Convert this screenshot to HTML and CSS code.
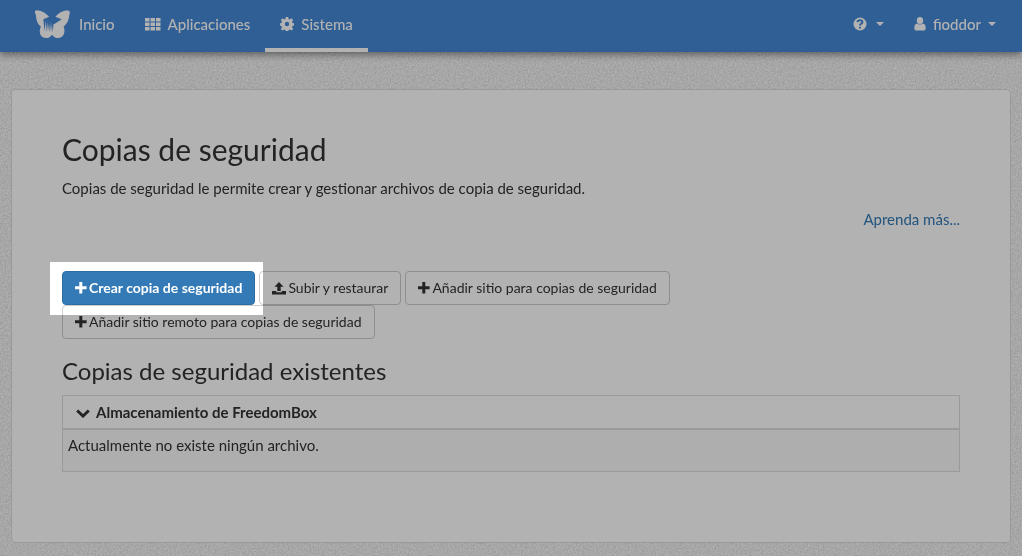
FILE: index.html
```html
<!DOCTYPE html>
<html lang="es">
<head>
<meta charset="utf-8">
<meta name="viewport" content="width=device-width, initial-scale=1">
<title>Copias de seguridad</title>
<link rel="stylesheet" href="styles.css">
</head>
<body>
<svg class="paper" aria-hidden="true">
  <filter id="grain" x="0" y="0" width="100%" height="100%" color-interpolation-filters="sRGB">
    <feTurbulence type="fractalNoise" baseFrequency="0.6" numOctaves="2" seed="4"/>
    <feColorMatrix values="0.2 0.1 0 0 0.787  0.2 0.1 0 0 0.787  0.2 0.1 0 0 0.787  0 0 0 0 1"/>
  </filter>
  <rect width="100%" height="100%" filter="url(#grain)"/>
</svg>
<nav class="navbar">
  <div class="nav-left">
    <a class="brand" href="#" aria-label="FreedomBox, Inicio">
      <svg class="logo" viewBox="0 0 38 30">
        <path fill="#fff" d="M1 3C0 1 2 0 4 0.500C9 1 13 4 15.500 7L9.500 9.500L13 12L20 15L25 12L28.500 9.500L22 7C25 3 30 0.500 34 0.500C37 0.500 37.500 2 36.500 5C36 9 35 14 30.500 17C33 23 30 29 25 29C22 29 20 27.500 18.500 25.500C17 27.500 15.500 29 12 29C7 29 4 23 7 17C3.500 15 2 10 2 6Z"/>
        <path fill="#4488d6" d="M9.500 9.500L10.800 22L12 11.500L13.200 23L14.200 12.500L15.500 23L16.400 13.500L17.500 23L18.300 14.200L19.300 23L20 15Z"/>
      </svg>
      <span>Inicio</span>
    </a>
    <a class="nav-link" href="#">
      <svg class="icon-grid" viewBox="0 0 16 13" fill="#fff"><path d="M0 0h4.500v3.500H0zM5.500 0H10v3.500H5.500zM11 0h4.500v3.500H11zM0 4.500h4.500V8H0zM5.500 4.500H10V8H5.500zM11 4.500h4.500V8H11zM0 9h4.500v3.500H0zM5.500 9H10v3.500H5.500zM11 9h4.500v3.500H11z"/></svg>
      <span>Aplicaciones</span>
    </a>
    <a class="nav-link active" href="#">
      <svg class="icon" viewBox="0 0 14 14"><path fill="#fff" fill-rule="evenodd" d="M5.800 0h2.400l.4 2 1.200.5 1.700-1.200 1.700 1.700-1.200 1.700.5 1.200 1.500.3v2.400l-1.500.4-.5 1.200 1.200 1.700-1.700 1.700-1.700-1.200-1.200.5-.4 1.600H5.800l-.4-1.600-1.200-.5-1.700 1.200L.8 11.900 2 10.200 1.500 9 0 8.600V6.200l1.500-.3L2 4.700.8 3l1.700-1.700 1.700 1.200L5.400 2zM7 4.800a2.200 2.200 0 1 0 0 4.400a2.200 2.200 0 0 0 0-4.400z"/></svg>
      <span>Sistema</span>
    </a>
  </div>
  <div class="nav-right">
    <button class="nav-menu" type="button" aria-label="Ayuda">
      <svg class="icon" viewBox="0 0 14 14"><circle cx="7" cy="7" r="6.500" fill="#fff"/><path fill="none" stroke="#4488d6" stroke-width="2" d="M4.500 5.200Q4.700 3.300 7 3.300T9.400 5.200Q9.400 6.300 8 6.900Q7 7.300 7 8.600M7 9.700v1.800"/></svg>
      <span class="caret"></span>
    </button>
    <button class="nav-menu user" type="button">
      <svg class="icon-user" viewBox="0 0 12 14"><path fill="#fff" d="M6 0a3.200 3.500 0 0 1 0 7a3.200 3.500 0 0 1 0-7zM3 6.500Q6 8.700 9 6.500Q11.700 7 11.700 11Q11.700 13.500 10 13.500H2Q.3 13.500.3 11Q.3 7 3 6.500z"/></svg>
      <span>fioddor</span>
      <span class="caret"></span>
    </button>
  </div>
</nav>
<main class="card">
  <h1>Copias de seguridad</h1>
  <p class="lead">Copias de seguridad le permite crear y gestionar archivos de copia de seguridad.</p>
  <p class="more"><a href="#">Aprenda más...</a></p>
  <div class="toolbar">
    <div class="highlighted">
      <a class="btn primary" href="#"><svg class="plus" viewBox="0 0 12 12"><path d="M4.300 0h3v4.300H11.600v3H7.300v4.300h-3V7.300H0v-3h4.300z"/></svg><span>Crear copia de seguridad</span></a>
      <div class="spotlight"></div>
    </div>
    <a class="btn" href="#"><svg class="upload" viewBox="0 0 14 13"><path d="M7 0l4.500 4.700H8.700V9H5.300V4.700H2.500zM0 9h4.300v1.200h5.400V9H14v3.500H0z"/></svg><span>Subir y restaurar</span></a>
    <a class="btn" href="#"><svg class="plus" viewBox="0 0 12 12"><path d="M4.300 0h3v4.300H11.600v3H7.300v4.300h-3V7.300H0v-3h4.300z"/></svg><span>Añadir sitio para copias de seguridad</span></a>
    <a class="btn" href="#"><svg class="plus" viewBox="0 0 12 12"><path d="M4.300 0h3v4.300H11.600v3H7.300v4.300h-3V7.300H0v-3h4.300z"/></svg><span>Añadir sitio remoto para copias de seguridad</span></a>
  </div>
  <h3>Copias de seguridad existentes</h3>
  <table class="archives">
    <thead>
      <tr><th scope="col"><svg class="chevron" viewBox="0 0 14 9"><path d="M1.200 1.500L7 7L12.800 1.500"/></svg>Almacenamiento de FreedomBox</th></tr>
    </thead>
    <tbody>
      <tr><td>Actualmente no existe ningún archivo.</td></tr>
    </tbody>
  </table>
</main>
</body>
</html>
```
FILE: styles.css
```css
* { box-sizing: border-box; }
body {
  margin: 0;
  background: #f0f0f0;
  color: #333;
  font: 15px/22px Lato, sans-serif;
}
a { color: #337ab7; text-decoration: none; }
svg { flex: none; }
.paper {
  position: fixed;
  inset: 0;
  z-index: -1;
  width: 100%;
  height: 100%;
}
.navbar {
  display: flex;
  justify-content: space-between;
  height: 52px;
  padding: 0 11px 0 34px;
  background: #4488d6;
  box-shadow: 0 2px 8px rgba(0, 0, 0, 0.5);
  font-weight: 500;
}
.nav-left, .nav-right { display: flex; }
.brand, .nav-link, .nav-menu {
  display: flex;
  align-items: center;
  color: #fff;
  padding: 0 15px 4px;
}
.brand { gap: 8px; padding-left: 0; }
.nav-link { gap: 7px; }
.nav-link.active { border-bottom: 4px solid #fff; padding-bottom: 0; }
.nav-menu {
  gap: 9px;
  border: 0;
  background: none;
  font: inherit;
}
.nav-menu.user { gap: 7px; }
.logo { width: 37px; height: 29px; }
.icon { width: 14px; height: 14px; }
.icon-grid { width: 16px; height: 13px; }
.icon-user { width: 12px; height: 14px; }
.caret {
  border: 4px solid transparent;
  border-top-color: #fff;
  border-bottom: 0;
}
.card {
  margin: 37px 11px 13px;
  padding: 39px 50px 70px;
  border: 1px solid #dcdcdc;
  border-radius: 4px;
  background: #fff;
}
h1, h3 { margin: 0; font-weight: 400; }
h1 { font-size: 30px; line-height: 40px; }
h3 { margin: 17px 0 9px; font-size: 24px; line-height: 30px; }
.lead { margin: 8px 0 9px; }
.more { margin: 0 0 41px; text-align: right; }
.toolbar { display: flex; flex-wrap: wrap; column-gap: 4px; }
.btn {
  display: flex;
  align-items: center;
  gap: 2px;
  height: 34px;
  padding: 0 12px;
  border: 1px solid #ccc;
  border-radius: 4px;
  color: #333;
  font-size: 14px;
  line-height: 20px;
}
.btn svg { fill: currentColor; }
.btn.primary { border-color: #2e6da4; background: #337ab7; color: #fff; font-weight: 700; }
.plus { width: 12px; height: 12px; }
.upload { width: 14px; height: 13px; }
.highlighted { position: relative; }
.spotlight {
  position: absolute;
  inset: -9px -8px -10px -12px;
  z-index: 10;
  box-shadow: 0 0 0 9999px rgba(0, 0, 0, 0.3);
  pointer-events: none;
}
.archives { width: 100%; border-collapse: separate; border-spacing: 0; border: 1px solid #ddd; }
.archives th {
  padding: 5px 13px;
  border-bottom: 1px solid #ddd;
  text-align: left;
}
.archives td {
  height: 42px;
  padding: 4px 5px;
  border-top: 1px solid #ddd;
  background: #f9f9f9;
  vertical-align: top;
}
.chevron { width: 14px; height: 9px; margin-right: 6px; fill: none; stroke: currentColor; stroke-width: 3; }
```
